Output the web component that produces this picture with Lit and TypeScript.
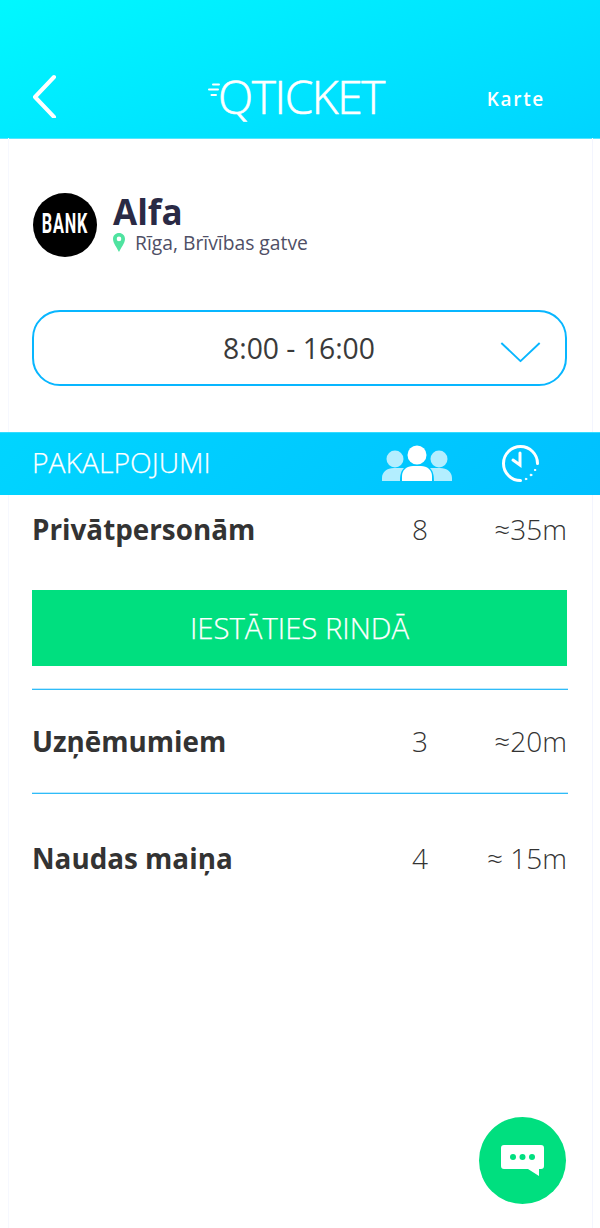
import { LitElement, html, css } from "lit";
import { customElement } from "lit/decorators.js";

const services = [
  { name: "Uzņēmumiem", count: "3", time: "≈20m", cls: "r2" },
  { name: "Naudas maiņa", count: "4", time: "≈ 15m", cls: "r3" },
];

@customElement("app-root")
export class AppRoot extends LitElement {
  static styles = css`
    :host { display: block; width: 600px; height: 1228px; background: #fff; font-family: "Open Sans", sans-serif; overflow: hidden; }
    .page { position: relative; width: 600px; height: 1228px; display: flex; flex-direction: column; }
    .frame { position: absolute; top: 138px; bottom: 0; left: 8px; width: 583px; border-left: 1px solid #f6f8fe; border-right: 1px solid #f3f5fe; pointer-events: none; }
    header { height: 139px; box-sizing: border-box; flex: none; background: linear-gradient(160deg, #00f8ff 0%, #00d4ff 100%); display: grid; grid-template-columns: 1fr auto 1fr; align-items: start; padding: 74px 55px 0 31px; color: #fff; border-bottom: 1px solid #55e6ff; }
    .back { width: 28px; height: 44px; display: block; }
    .logo { display: flex; align-items: center; margin-top: -5px; margin-left: 16px; }
    .logo svg { width: 12px; height: 16px; margin-right: -2px; margin-top: -11px; }
    .logo span { font-size: 46px; font-weight: 300; letter-spacing: -1.4px; line-height: 54px; -webkit-text-stroke: 0.6px #fff; }
    .karte { justify-self: end; font-size: 19px; font-weight: 600; letter-spacing: 1.7px; margin-top: 12px; line-height: 26px; }
    .info { display: flex; align-items: center; padding: 54px 32px 0 33px; gap: 16px; }
    .avatar { width: 64px; height: 64px; border-radius: 50%; background: #000; color: #fff; display: flex; align-items: center; justify-content: center; flex: none; font-family: "Roboto", sans-serif; font-weight: 700; font-size: 28px; padding-bottom: 3px; box-sizing: border-box; }
    .avatar span { display: inline-block; transform: scaleX(0.58); letter-spacing: 1.4px; }
    .title { font-size: 35px; font-weight: 700; color: #2a2a45; line-height: 38px; margin-top: -4px; }
    .addr { display: flex; align-items: center; gap: 10px; font-size: 19.3px; color: #4f4f66; line-height: 22px; margin-top: 1px; }
    .addr svg { width: 12px; height: 19px; }
    .select { margin: 53px 33px 0 32px; height: 76px; box-sizing: border-box; border: 2px solid #08b6ff; border-radius: 28px; position: relative; display: flex; align-items: center; justify-content: center; font-size: 28.3px; color: #3a3a3a; padding-right: 1px; }
    .select svg { position: absolute; right: 24px; top: 30px; width: 41px; height: 23px; }
    .bar { margin-top: 46px; height: 63px; flex: none; box-sizing: border-box; background: linear-gradient(135deg, #00d5ff 0%, #00c0ff 100%); color: #fff; display: flex; align-items: center; padding: 0 0 4px 32px; font-size: 28.3px; font-weight: 300; position: relative; border-top: 1px solid #33dcff; -webkit-text-stroke: 0.25px #fff; }
    .bar .label { flex: 1; }
    .people { position: absolute; left: 382px; top: 12px; width: 70px; height: 37px; }
    .clock { position: absolute; left: 502px; top: 12px; width: 38px; height: 38px; }
    .row { display: flex; align-items: center; margin: 0 33px 0 32px; color: #333; font-size: 28px; height: 40px; }
    .row .name { flex: 1; font-weight: 700; font-size: 27.8px; }
    .row .count { width: 30px; text-align: center; font-weight: 300; }
    .row .time { font-weight: 300; width: 132px; text-align: right; white-space: nowrap; }
    .r1 { margin-top: 14px; }
    .cta { margin: 41px 33px 0 32px; height: 76px; flex: none; background: #00df7f; color: #fff; font-size: 29.3px; font-weight: 300; display: flex; align-items: center; justify-content: center; -webkit-text-stroke: 0.25px #fff; }
    .rule { height: 2px; box-sizing: border-box; flex: none; margin: 22px 32px 0; background: #2fbcf8; border-top: 1px solid #bde9fd; }
    .r2 { margin-top: 31px; }
    .rule2 { margin-top: 31px; }
    .r3 { margin-top: 44px; }
    .fab { position: absolute; left: 479px; top: 1117px; width: 87px; height: 87px; border-radius: 50%; background: #00df7f; display: flex; align-items: center; justify-content: center; }
    .fab svg { width: 43px; height: 31px; }
  `;

  render() {
    return html`<div class="page">
      <div class="frame"></div>
      <header>
        <svg class="back" viewBox="0 0 28 44" fill="none" stroke="#fff" stroke-width="4" stroke-linecap="round" stroke-linejoin="round"><path d="M23 3 L4 23 L23 43"/></svg>
        <div class="logo">
          <svg viewBox="0 0 12 16" fill="none" stroke="#fff" stroke-width="2" stroke-linecap="round"><path d="M5 1.500 H11 M1 6.500 H10 M3.500 12 H8"/></svg>
          <span>QTICKET</span>
        </div>
        <div class="karte">Karte</div>
      </header>
      <section class="info">
        <div class="avatar"><span>BANK</span></div>
        <div>
          <div class="title">Alfa</div>
          <div class="addr">
            <svg viewBox="0 0 12 19"><path fill-rule="evenodd" fill="#4fe3a0" d="M6 0 C2.600 0 0 2.600 0 5.900 C0 10 4 14.500 6 19 C8 14.500 12 10 12 5.900 C12 2.600 9.400 0 6 0 Z M6 3.600 A2.300 2.300 0 1 1 6 8.200 A2.300 2.300 0 1 1 6 3.600 Z"/></svg>
            <span>Rīga, Brīvības gatve</span>
          </div>
        </div>
      </section>
      <div class="select">
        <span>8:00 - 16:00</span>
        <svg viewBox="0 0 42 24" fill="none" stroke="#08b6ff" stroke-width="2" stroke-linejoin="round"><path d="M1 1 L21 20 L41 1"/></svg>
      </div>
      <div class="bar">
        <span class="label">PAKALPOJUMI</span>
        <svg class="people" viewBox="0 0 70 37">
          <g fill="#b3eeff">
            <circle cx="13" cy="14" r="8.500"/><circle cx="57" cy="14" r="8.500"/>
            <path d="M0 36 V33 C0 27 5 23 12 23 H22 C19 26 18 30 18 36 Z"/>
            <path d="M70 36 V33 C70 27 65 23 58 23 H48 C51 26 52 30 52 36 Z"/>
          </g>
          <g fill="#fff">
            <circle cx="35" cy="10" r="9.500"/>
            <path d="M20 36 V31 C20 25 25 21 31 21 H39 C45 21 50 25 50 31 V36 Z"/>
          </g>
        </svg>
        <svg class="clock" viewBox="0 0 38 38" fill="none" stroke="#fff" stroke-linecap="round">
          <path stroke-width="3" d="M35.500 18.500 A17 17 0 1 0 18.500 35.500"/>
          <path stroke-width="3" d="M18 8 V20 L11 15"/>
          <circle cx="24" cy="34" r=".8" fill="#fff" stroke-width="1"/>
          <circle cx="29" cy="30" r=".9" fill="#fff" stroke-width="1"/>
          <circle cx="33" cy="25" r=".7" fill="#fff" stroke-width="1"/>
        </svg>
      </div>
      <div class="row r1"><span class="name">Privātpersonām</span><span class="count">8</span><span class="time">≈35m</span></div>
      <div class="cta">IESTĀTIES RINDĀ</div>
      <div class="rule"></div>
      <div class="row ${services[0].cls}"><span class="name">${services[0].name}</span><span class="count">${services[0].count}</span><span class="time">${services[0].time}</span></div>
      <div class="rule rule2"></div>
      <div class="row ${services[1].cls}"><span class="name">${services[1].name}</span><span class="count">${services[1].count}</span><span class="time">${services[1].time}</span></div>
      <div class="fab">
        <svg viewBox="0 0 43 31">
          <path fill="#fff" d="M3 0 H40 A3 3 0 0 1 43 3 V21 A3 3 0 0 1 40 24 H38 V31 L27 24 H3 A3 3 0 0 1 0 21 V3 A3 3 0 0 1 3 0 Z"/>
          <circle cx="12" cy="12" r="3" fill="#00df7f"/><circle cx="21.500" cy="12" r="3" fill="#00df7f"/><circle cx="31" cy="12" r="3" fill="#00df7f"/>
        </svg>
      </div>
    </div>`;
  }
}
